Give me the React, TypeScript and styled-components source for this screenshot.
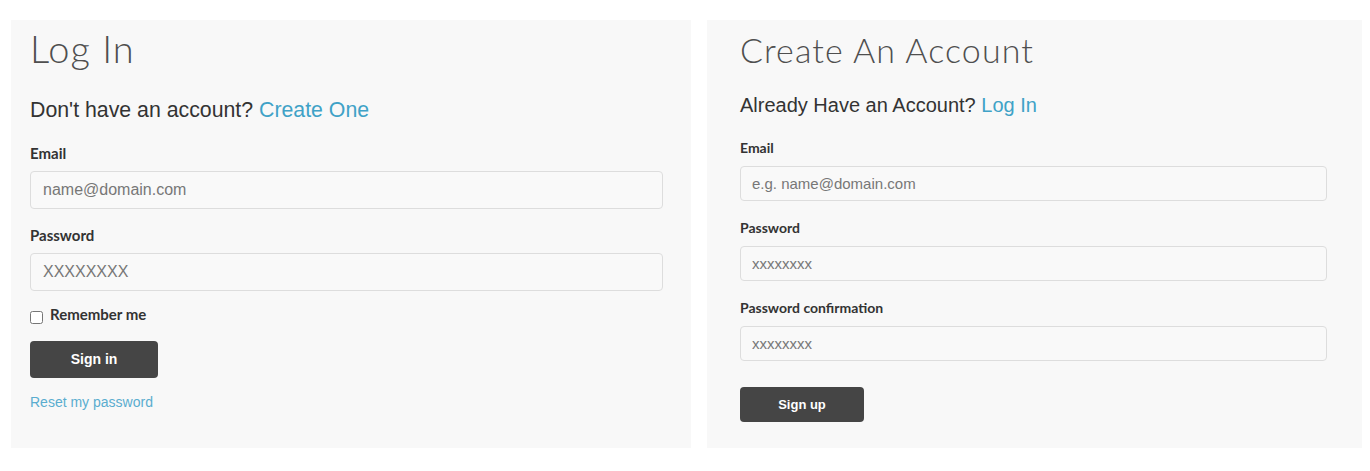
import React from 'react';
import styled, { createGlobalStyle } from 'styled-components';

type Size = 'lg' | 'md';

// the two forms were captured at slightly different zoom levels
const sizes = {
  lg: {
    width: 680, padTop: 6, padLeft: 19, padRight: 28,
    title: 38, titleLh: 44, titleTrack: 1, sub: 21.3, subLh: 24, subGap: 28.3,
    label: 15, labelLh: 18, labelGap: 9, firstGap: 22,
    input: 38, inputFont: 16, inputPad: 12, field: 16.5,
    btnW: 128, btnH: 37, btnFont: 14, btnGap: 16.5, resetGap: 16.5,
  },
  md: {
    width: 655, padTop: 10, padLeft: 33, padRight: 35,
    title: 34, titleLh: 40, titleTrack: 1.1, sub: 20, subLh: 23, subGap: 23.8,
    label: 14, labelLh: 17, labelGap: 10, firstGap: 22.2,
    input: 35, inputFont: 15, inputPad: 11, field: 18,
    btnW: 124, btnH: 35, btnFont: 13, btnGap: 26, resetGap: 0,
  },
};

const GlobalStyle = createGlobalStyle`
  html, body {
    margin: 0;
    padding: 0;
    background: #ffffff;
  }
  * {
    box-sizing: border-box;
  }
`;

const Page = styled.div`
  display: flex;
  gap: 16px;
  padding: 20px 0 0 11px;
  font-family: "Liberation Sans", Arial, sans-serif;
`;

const Panel = styled.div<{ $size: Size }>`
  width: ${(p) => sizes[p.$size].width}px;
  height: 428px;
  background: #f8f8f8;
  padding: ${(p) => sizes[p.$size].padTop}px ${(p) => sizes[p.$size].padRight}px 0
    ${(p) => sizes[p.$size].padLeft}px;
  display: flex;
  flex-direction: column;
`;

const Title = styled.h1<{ $size: Size }>`
  margin: 0;
  font-family: Lato, "Open Sans", sans-serif;
  font-weight: 300;
  font-size: ${(p) => sizes[p.$size].title}px;
  line-height: ${(p) => sizes[p.$size].titleLh}px;
  letter-spacing: ${(p) => sizes[p.$size].titleTrack}px;
  color: #4f4f4f;
`;

const Subtitle = styled.p<{ $size: Size }>`
  margin: ${(p) => sizes[p.$size].subGap}px 0 0;
  font-size: ${(p) => sizes[p.$size].sub}px;
  line-height: ${(p) => sizes[p.$size].subLh}px;
  color: #333333;
`;

const Link = styled.a<{ $light?: boolean }>`
  color: ${(p) => (p.$light ? '#5aadcf' : '#3fa2c7')};
  text-decoration: none;
  cursor: pointer;
`;

const Form = styled.form<{ $size: Size }>`
  display: flex;
  flex-direction: column;
  gap: ${(p) => sizes[p.$size].field}px;
  margin-top: ${(p) => sizes[p.$size].firstGap}px;
`;

const Field = styled.div`
  display: flex;
  flex-direction: column;
`;

const Label = styled.label<{ $size: Size; $inline?: boolean }>`
  font-family: Lato, "Open Sans", sans-serif;
  font-weight: 700;
  font-size: ${(p) => sizes[p.$size].label}px;
  line-height: ${(p) => sizes[p.$size].labelLh}px;
  margin-bottom: ${(p) => (p.$inline ? 0 : sizes[p.$size].labelGap)}px;
  color: #333333;
`;

const Input = styled.input<{ $size: Size }>`
  width: 100%;
  height: ${(p) => sizes[p.$size].input}px;
  padding: 0 ${(p) => sizes[p.$size].inputPad}px;
  border: 1px solid #dddddd;
  border-radius: 4px;
  background: #f9f9f9;
  font-family: "Liberation Sans", Arial, sans-serif;
  font-size: ${(p) => sizes[p.$size].inputFont}px;
  color: #555555;
  outline: none;

  &::placeholder {
    color: #777777;
  }
`;

const CheckRow = styled.div`
  display: flex;
  align-items: flex-start;
  gap: 7px;
  margin-top: -2px;
`;

const Checkbox = styled.input`
  width: 13px;
  height: 13px;
  margin: 6px 0 0;
`;

const Button = styled.button<{ $size: Size }>`
  width: ${(p) => sizes[p.$size].btnW}px;
  height: ${(p) => sizes[p.$size].btnH}px;
  margin-top: ${(p) => sizes[p.$size].btnGap}px;
  border: none;
  border-radius: 4px;
  background: #454545;
  color: #ffffff;
  font-family: "Liberation Sans", Arial, sans-serif;
  font-weight: 700;
  font-size: ${(p) => sizes[p.$size].btnFont}px;
  cursor: pointer;
`;

const Reset = styled.div<{ $size: Size }>`
  margin-top: ${(p) => sizes[p.$size].resetGap}px;
  font-size: 14px;
  line-height: 17px;
`;

const LoginForm: React.FC = () => (
  <Panel $size="lg">
    <Title $size="lg">Log In</Title>
    <Subtitle $size="lg">
      Don't have an account? <Link>Create One</Link>
    </Subtitle>
    <Form $size="lg" onSubmit={(e) => e.preventDefault()}>
      <Field>
        <Label $size="lg">Email</Label>
        <Input $size="lg" type="email" placeholder="name@domain.com" />
      </Field>
      <Field>
        <Label $size="lg">Password</Label>
        <Input $size="lg" type="password" placeholder="XXXXXXXX" />
      </Field>
      <CheckRow>
        <Checkbox type="checkbox" />
        <Label $size="lg" $inline>Remember me</Label>
      </CheckRow>
    </Form>
    <Button $size="lg">Sign in</Button>
    <Reset $size="lg">
      <Link $light>Reset my password</Link>
    </Reset>
  </Panel>
);

const SignupForm: React.FC = () => (
  <Panel $size="md">
    <Title $size="md">Create An Account</Title>
    <Subtitle $size="md">
      Already Have an Account? <Link>Log In</Link>
    </Subtitle>
    <Form $size="md" onSubmit={(e) => e.preventDefault()}>
      <Field>
        <Label $size="md">Email</Label>
        <Input $size="md" type="email" placeholder="e.g. name@domain.com" />
      </Field>
      <Field>
        <Label $size="md">Password</Label>
        <Input $size="md" type="password" placeholder="xxxxxxxx" />
      </Field>
      <Field>
        <Label $size="md">Password confirmation</Label>
        <Input $size="md" type="password" placeholder="xxxxxxxx" />
      </Field>
    </Form>
    <Button $size="md">Sign up</Button>
  </Panel>
);

export default function App() {
  return (
    <>
      <GlobalStyle />
      <Page>
        <LoginForm />
        <SignupForm />
      </Page>
    </>
  );
}
